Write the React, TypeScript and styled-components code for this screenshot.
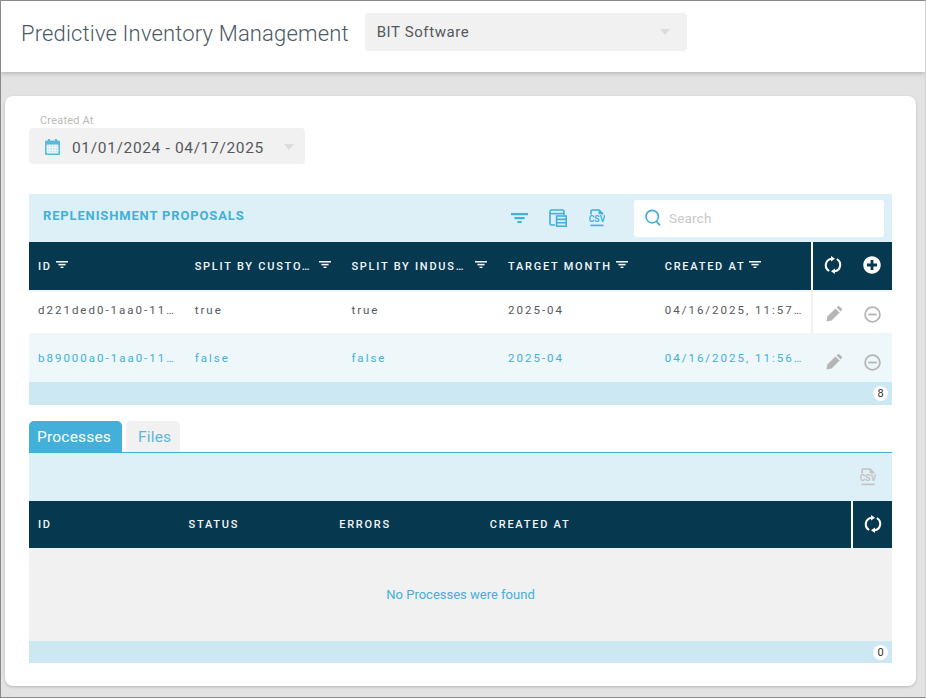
import React from "react"
import styled, { createGlobalStyle } from "styled-components"
import { FaPlusCircle } from "react-icons/fa"

const BLUE = "#42b0d8"
const NAVY = "#063850"

const GlobalStyle = createGlobalStyle`
	html, body {
		margin: 0;
		padding: 0;
	}
	body {
		font-family: Roboto, "Liberation Sans", sans-serif;
		background: #e3e3e3;
	}
	#root {
		height: 698px;
	}
`

const FilterIcon = ({ size = 12 }: { size?: number }) => (
	<svg width={size} height={size * 0.6} viewBox="0 0 20 12" fill="currentColor">
		<rect x="0" y="0" width="20" height="2.6" />
		<rect x="4" y="4.7" width="12" height="2.6" />
		<rect x="7.5" y="9.4" width="5" height="2.6" />
	</svg>
)

const RefreshIcon = () => (
	<svg width="18" height="18" viewBox="0 0 18 18" fill="none" stroke="currentColor" strokeWidth="2">
		<path d="M8 2.7 H7.5 A6.6 6.6 0 0 0 5.2 15" />
		<path d="M7 0 L11 2.7 L7 5.4 Z" fill="currentColor" stroke="none" />
		<path d="M10 15.3 H10.5 A6.6 6.6 0 0 0 12.8 3" />
		<path d="M11 12.6 L7 15.3 L11 18 Z" fill="currentColor" stroke="none" />
	</svg>
)

const MinusIcon = () => (
	<svg width="17" height="17" viewBox="0 0 17 17" fill="none" stroke="currentColor" strokeWidth="1.8">
		<circle cx="8.5" cy="8.5" r="7.4" />
		<path d="M4.2 8.5 H12.8" />
	</svg>
)

const PencilIcon = () => (
	<svg width="16" height="16" viewBox="0 0 16 16" fill="currentColor">
		<path d="M0.5 15.5 L1.4 10.4 L9.4 2.4 L13.6 6.6 L5.6 14.6 Z" />
		<path d="M10.6 1.4 L11.8 0.4 A1.2 1.2 0 0 1 13.5 0.4 L15.6 2.5 A1.2 1.2 0 0 1 15.6 4.2 L14.6 5.4 Z" />
	</svg>
)

const SearchIcon = () => (
	<svg width="16" height="18" viewBox="0 0 16 18" fill="none" stroke={BLUE} strokeWidth="1.7">
		<circle cx="7.2" cy="7.6" r="6.2" />
		<path d="M11.4 12.4 L15 16.4" />
	</svg>
)

const CalendarIcon = () => (
	<svg width="15" height="16" viewBox="0 0 15 16">
		<rect x="0" y="1.5" width="15" height="14.5" rx="1.2" fill="#5bb9dc" />
		<rect x="3" y="0" width="2" height="3" fill="#5bb9dc" />
		<rect x="10" y="0" width="2" height="3" fill="#5bb9dc" />
		<path
			d="M2 6 H13 V14 H2 Z M2 8.6 H13 M2 11.3 H13 M4.7 6 V14 M7.5 6 V14 M10.3 6 V14"
			fill="#bfe3f1"
			stroke="#ffffff"
			strokeWidth="0.8"
		/>
	</svg>
)

const ColumnsIcon = () => (
	<svg width="18" height="18" viewBox="0 0 18 18" fill="none" stroke={BLUE} strokeWidth="1.6">
		<path d="M6 16 H2.5 A1.5 1.5 0 0 1 1 14.5 V2.5 A1.5 1.5 0 0 1 2.5 1 H13.5 A1.5 1.5 0 0 1 15 2.5 V6" />
		<path d="M1 4.6 H15" />
		<rect x="7.6" y="7" width="9.6" height="10.2" fill="#ddf0f8" />
		<path d="M7.6 10.4 H17.2 M7.6 13.8 H17.2" />
	</svg>
)

const CsvIcon = ({ color }: { color: string }) => (
	<svg width="16" height="18" viewBox="0 0 16 18">
		<path d="M2 5.6 V2.2 A1.2 1.2 0 0 1 3.2 1 H10 L13.6 4.6 V5.6" fill="none" stroke={color} strokeWidth="1.6" />
		<path d="M9.6 0.4 L14.4 5.2 H9.6 Z" fill={color} />
		<text x="8" y="13.2" textAnchor="middle" fontSize="8.6" fontWeight="700" fill={color} fontFamily="Roboto, sans-serif">
			CSV
		</text>
		<rect x="1.4" y="15.6" width="13.2" height="1.6" fill={color} />
	</svg>
)

const Frame = styled.div`
	box-sizing: border-box;
	height: 698px;
	display: flex;
	flex-direction: column;
	background: #e3e3e3;
	border: 1px solid #8a8a8a;
	border-right-color: #cfcfcf;
	overflow: hidden;
`

const Header = styled.header`
	box-sizing: border-box;
	flex: none;
	height: 71px;
	display: flex;
	align-items: center;
	gap: 16px;
	padding: 0 0 9px 20px;
	background: #ffffff;
	box-shadow: 0 1px 5px rgba(0, 0, 0, 0.25);
	position: relative;
`

const AppTitle = styled.h1`
	margin: 2px 0 0;
	font-size: 22px;
	font-weight: 300;
	letter-spacing: 0.16px;
	color: #4a5964;
	white-space: nowrap;
`

const Dropdown = styled.div<{ $width: number; $height: number }>`
	box-sizing: border-box;
	width: ${(p) => p.$width}px;
	height: ${(p) => p.$height}px;
	display: flex;
	align-items: center;
	background: #f1f1f1;
	border-radius: 4px;
	color: #55585c;
`

const TenantDropdown = styled(Dropdown)`
	padding: 0 17px 0 12px;
	font-size: 15px;
	letter-spacing: 0.6px;
	justify-content: space-between;
`

const Caret = styled.span`
	width: 0;
	height: 0;
	border-left: 5.5px solid transparent;
	border-right: 5.5px solid transparent;
	border-top: 6px solid #dcdcdc;
`

const Card = styled.main`
	box-sizing: border-box;
	flex: none;
	width: 911px;
	height: 590px;
	margin: 24px 0 0 4px;
	padding: 16px 24px 0;
	background: #ffffff;
	border-radius: 8px;
	box-shadow: 0 1px 3px rgba(0, 0, 0, 0.2);
	display: flex;
	flex-direction: column;
`

const FieldLabel = styled.label`
	height: 16px;
	padding-left: 11px;
	font-size: 11px;
	line-height: 18px;
	letter-spacing: 0.2px;
	color: #bdb9b5;
`

const DateDropdown = styled(Dropdown)`
	padding: 2px 11px 0 16px;
	margin-bottom: 30px;
	gap: 12px;
	font-size: 15.5px;
	letter-spacing: 0.65px;
`

const DateText = styled.span`
	flex: 1;
	padding-top: 1px;
`

const Toolbar = styled.div`
	box-sizing: border-box;
	flex: none;
	height: 48px;
	display: flex;
	align-items: center;
	background: #ddf0f8;
`

const ToolbarTitle = styled.h2`
	flex: 1;
	margin: 0 0 5px 14px;
	font-size: 13px;
	font-weight: 700;
	letter-spacing: 0.85px;
	color: ${BLUE};
`

const ToolIcons = styled.div`
	display: flex;
	align-items: center;
	gap: 21px;
	margin-right: 28px;
	color: ${BLUE};
`

const ToolIcon = styled.span`
	display: flex;
	align-items: center;
	justify-content: center;
	width: 18px;
	height: 20px;
`

const SearchBox = styled.div`
	box-sizing: border-box;
	width: 250px;
	height: 37px;
	margin-right: 8px;
	display: flex;
	align-items: center;
	gap: 8px;
	padding-left: 11px;
	background: #ffffff;
	border-radius: 3px;
	font-size: 13.5px;
	letter-spacing: 0.2px;
	color: #c8c8c8;
`

const DisabledExport = styled.div`
	margin-left: auto;
	margin-right: 16px;
	display: flex;
`

const Row = styled.div<{ $columns: string }>`
	display: grid;
	grid-template-columns: ${(p) => p.$columns};
`

const HeadRow = styled(Row)<{ $height: number }>`
	height: ${(p) => p.$height}px;
	background: ${NAVY};
	color: #ffffff;
`

const HeadCell = styled.div`
	min-width: 0;
	display: flex;
	align-items: center;
	gap: 4px;
	padding-left: 9px;
	font-size: 11px;
	font-weight: 500;
	letter-spacing: 1.75px;
	white-space: nowrap;
	color: #f3f7f9;

	svg {
		flex: none;
		margin-bottom: 3px;
	}
`

const HeadLabel = styled.span<{ $width?: number }>`
	display: inline-block;
	width: ${(p) => (p.$width ? `${p.$width}px` : "auto")};
`

const ActionCell = styled.div<{ $line: string }>`
	display: flex;
	align-items: center;
	gap: 19px;
	padding: 0 0 2px 10px;
	border-left: 2px solid ${(p) => p.$line};

	svg {
		flex: none;
	}
`

const ActionButton = styled.span`
	display: flex;
	align-items: center;
	justify-content: center;
	width: 20px;
	height: 20px;
`

const BodyRow = styled(Row)<{ $active?: boolean; $height: number }>`
	box-sizing: border-box;
	height: ${(p) => p.$height}px;
	padding-top: ${(p) => (p.$active ? 4 : 0)}px;
	background: ${(p) => (p.$active ? "#eef7fa" : "#ffffff")};
	box-shadow: ${(p) => (p.$active ? "none" : "inset 0 2px 0 #f5f5f5")};
	color: ${(p) => (p.$active ? BLUE : "#55585c")};
`

const BodyCell = styled.div`
	min-width: 0;
	display: flex;
	align-items: center;
	padding: 0 0 3px 9px;
	font-size: 11.5px;
	letter-spacing: 2px;
	white-space: nowrap;
`

const RowActions = styled(ActionCell)`
	color: #b5b5b5;
	padding: 5px 0 0 11px;
`

const TableFooter = styled.div<{ $height: number }>`
	flex: none;
	height: ${(p) => p.$height}px;
	display: flex;
	align-items: center;
	justify-content: flex-end;
	padding-right: 4px;
	background: #cce8f3;
`

const CountBadge = styled.span`
	min-width: 15px;
	height: 15px;
	border-radius: 8px;
	background: #ffffff;
	font-size: 11px;
	line-height: 15px;
	text-align: center;
	color: #333333;
`

const Tabs = styled.nav`
	flex: none;
	height: 31px;
	margin-top: 16px;
	display: flex;
	align-items: flex-end;
	gap: 4px;
	border-bottom: 1px solid ${BLUE};
`

const Tab = styled.button<{ $active?: boolean; $width: number }>`
	box-sizing: border-box;
	width: ${(p) => p.$width}px;
	height: 31px;
	padding: 0 0 0 ${(p) => (p.$active ? 8 : 12)}px;
	border: 0;
	border-radius: 5px 5px 0 0;
	background: ${(p) => (p.$active ? BLUE : "#f1f1f1")};
	color: ${(p) => (p.$active ? "#ffffff" : "#5cb6da")};
	font-family: inherit;
	font-size: 15.5px;
	letter-spacing: 0.2px;
	text-align: left;
`

const EmptyBody = styled.div`
	flex: none;
	height: 93px;
	display: flex;
	align-items: center;
	justify-content: center;
	background: #f1f1f1;
	font-size: 13px;
	color: ${BLUE};
`

const proposalColumns = "156.7px 156.7px 156.7px 156.7px 155.2px 81px"
const processColumns = "150.6px 150.6px 150.6px 1fr 41px"

const proposals = [
	{ id: "d221ded0-1aa0-11…", customer: "true", industry: "true", month: "2025-04", created: "04/16/2025, 11:57…" },
	{ id: "b89000a0-1aa0-11…", customer: "false", industry: "false", month: "2025-04", created: "04/16/2025, 11:56…", active: true },
]

const App = () => (
	<>
		<GlobalStyle />
		<Frame>
			<Header>
				<AppTitle>Predictive Inventory Management</AppTitle>
				<TenantDropdown $width={322} $height={38}>
					BIT Software
					<Caret />
				</TenantDropdown>
			</Header>
			<Card>
				<FieldLabel>Created At</FieldLabel>
				<DateDropdown $width={276} $height={36}>
					<CalendarIcon />
					<DateText>01/01/2024 - 04/17/2025</DateText>
					<Caret />
				</DateDropdown>

				<Toolbar>
					<ToolbarTitle>REPLENISHMENT PROPOSALS</ToolbarTitle>
					<ToolIcons>
						<ToolIcon>
							<FilterIcon size={17} />
						</ToolIcon>
						<ToolIcon>
							<ColumnsIcon />
						</ToolIcon>
						<ToolIcon>
							<CsvIcon color={BLUE} />
						</ToolIcon>
					</ToolIcons>
					<SearchBox>
						<SearchIcon />
						Search
					</SearchBox>
				</Toolbar>
				<HeadRow $columns={proposalColumns} $height={48}>
					<HeadCell>
						<HeadLabel>ID</HeadLabel>
						<FilterIcon />
					</HeadCell>
					<HeadCell>
						<HeadLabel $width={120}>SPLIT BY CUSTO…</HeadLabel>
						<FilterIcon />
					</HeadCell>
					<HeadCell>
						<HeadLabel $width={120}>SPLIT BY INDUS…</HeadLabel>
						<FilterIcon />
					</HeadCell>
					<HeadCell>
						<HeadLabel>TARGET MONTH</HeadLabel>
						<FilterIcon />
					</HeadCell>
					<HeadCell>
						<HeadLabel>CREATED AT</HeadLabel>
						<FilterIcon />
					</HeadCell>
					<ActionCell $line="#ffffff">
						<ActionButton>
							<RefreshIcon />
						</ActionButton>
						<ActionButton>
							<FaPlusCircle size={18} />
						</ActionButton>
					</ActionCell>
				</HeadRow>
				{proposals.map((p, index) => (
					<BodyRow key={p.id} $columns={proposalColumns} $active={p.active} $height={index === 0 ? 43 : 49}>
						<BodyCell>{p.id}</BodyCell>
						<BodyCell>{p.customer}</BodyCell>
						<BodyCell>{p.industry}</BodyCell>
						<BodyCell>{p.month}</BodyCell>
						<BodyCell>{p.created}</BodyCell>
						<RowActions $line={p.active ? "transparent" : "#f1f1f1"}>
							<ActionButton>
								<PencilIcon />
							</ActionButton>
							<ActionButton>
								<MinusIcon />
							</ActionButton>
						</RowActions>
					</BodyRow>
				))}
				<TableFooter $height={23}>
					<CountBadge>8</CountBadge>
				</TableFooter>

				<Tabs>
					<Tab $active $width={93}>
						Processes
					</Tab>
					<Tab $width={54}>Files</Tab>
				</Tabs>
				<Toolbar>
					<DisabledExport>
						<CsvIcon color="#c2c2c2" />
					</DisabledExport>
				</Toolbar>
				<HeadRow $columns={processColumns} $height={47}>
					<HeadCell>ID</HeadCell>
					<HeadCell>STATUS</HeadCell>
					<HeadCell>ERRORS</HeadCell>
					<HeadCell>CREATED AT</HeadCell>
					<ActionCell $line="#ffffff">
						<ActionButton>
							<RefreshIcon />
						</ActionButton>
					</ActionCell>
				</HeadRow>
				<EmptyBody>No Processes were found</EmptyBody>
				<TableFooter $height={22}>
					<CountBadge>0</CountBadge>
				</TableFooter>
			</Card>
		</Frame>
	</>
)

export default App
